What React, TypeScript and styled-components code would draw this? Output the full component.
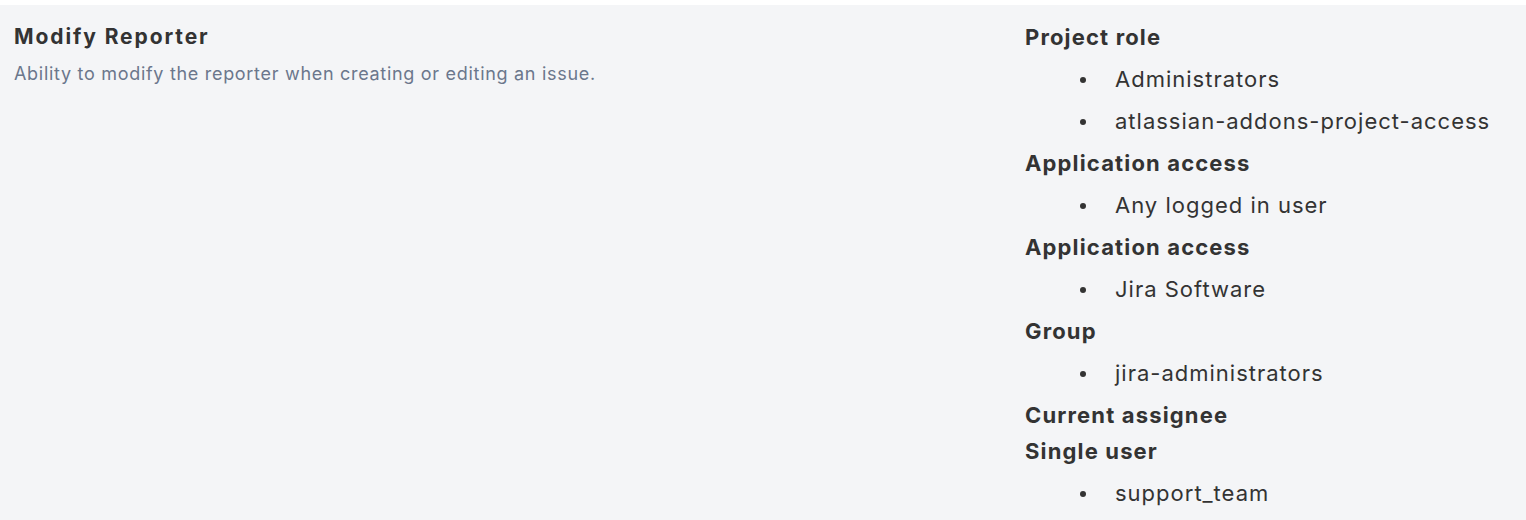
import React from "react";
import styled, { createGlobalStyle } from "styled-components";

const Global = createGlobalStyle`
  html, body { margin: 0; padding: 0; background: #ffffff; }
  body { font-family: Inter, "Noto Sans", "Liberation Sans", sans-serif; -webkit-font-smoothing: antialiased; }
`;

const Page = styled.div`
  padding-top: 5px;
  background: #ffffff;
`;

const Panel = styled.div`
  background: #f4f5f7;
  display: grid;
  grid-template-columns: 1011px 1fr;
  padding: 14px 14px 3px 14px;
  min-height: 498px;
  box-sizing: border-box;
`;

const Info = styled.div`
  display: flex;
  flex-direction: column;
`;

const Title = styled.h3`
  margin: 0;
  font-size: 21px;
  line-height: 36px;
  font-weight: 700;
  letter-spacing: 1.9px;
  color: #333333;
`;

const Description = styled.p`
  margin: 4px 0 0;
  font-size: 18px;
  line-height: 30px;
  letter-spacing: 0.7px;
  color: #6b778c;
`;

const Grants = styled.div`
  display: flex;
  flex-direction: column;
`;

const GrantType = styled.div`
  font-size: 22px;
  line-height: 36px;
  font-weight: 700;
  letter-spacing: 1.15px;
  color: #333333;
`;

const GrantList = styled.ul`
  margin: 0 0 6px;
  padding: 0 0 0 90px;
  list-style: none;
`;

const GrantItem = styled.li`
  position: relative;
  margin-top: 6px;
  font-size: 22px;
  line-height: 36px;
  letter-spacing: 1px;
  color: #333333;
  &::before {
    content: "";
    position: absolute;
    left: -35px;
    top: 16px;
    width: 6px;
    height: 6px;
    border-radius: 50%;
    background: #333333;
  }
`;

const grants: { type: string; items: string[] }[] = [
  { type: "Project role", items: ["Administrators", "atlassian-addons-project-access"] },
  { type: "Application access", items: ["Any logged in user"] },
  { type: "Application access", items: ["Jira Software"] },
  { type: "Group", items: ["jira-administrators"] },
  { type: "Current assignee", items: [] },
  { type: "Single user", items: ["support_team"] },
];

export default function App() {
  return (
    <>
      <Global />
      <Page>
        <Panel>
          <Info>
            <Title>Modify Reporter</Title>
            <Description>Ability to modify the reporter when creating or editing an issue.</Description>
          </Info>
          <Grants>
            {grants.map((g, i) => (
              <React.Fragment key={i}>
                <GrantType>{g.type}</GrantType>
                {g.items.length > 0 && (
                  <GrantList>
                    {g.items.map((it) => (
                      <GrantItem key={it}>{it}</GrantItem>
                    ))}
                  </GrantList>
                )}
              </React.Fragment>
            ))}
          </Grants>
        </Panel>
      </Page>
    </>
  );
}
